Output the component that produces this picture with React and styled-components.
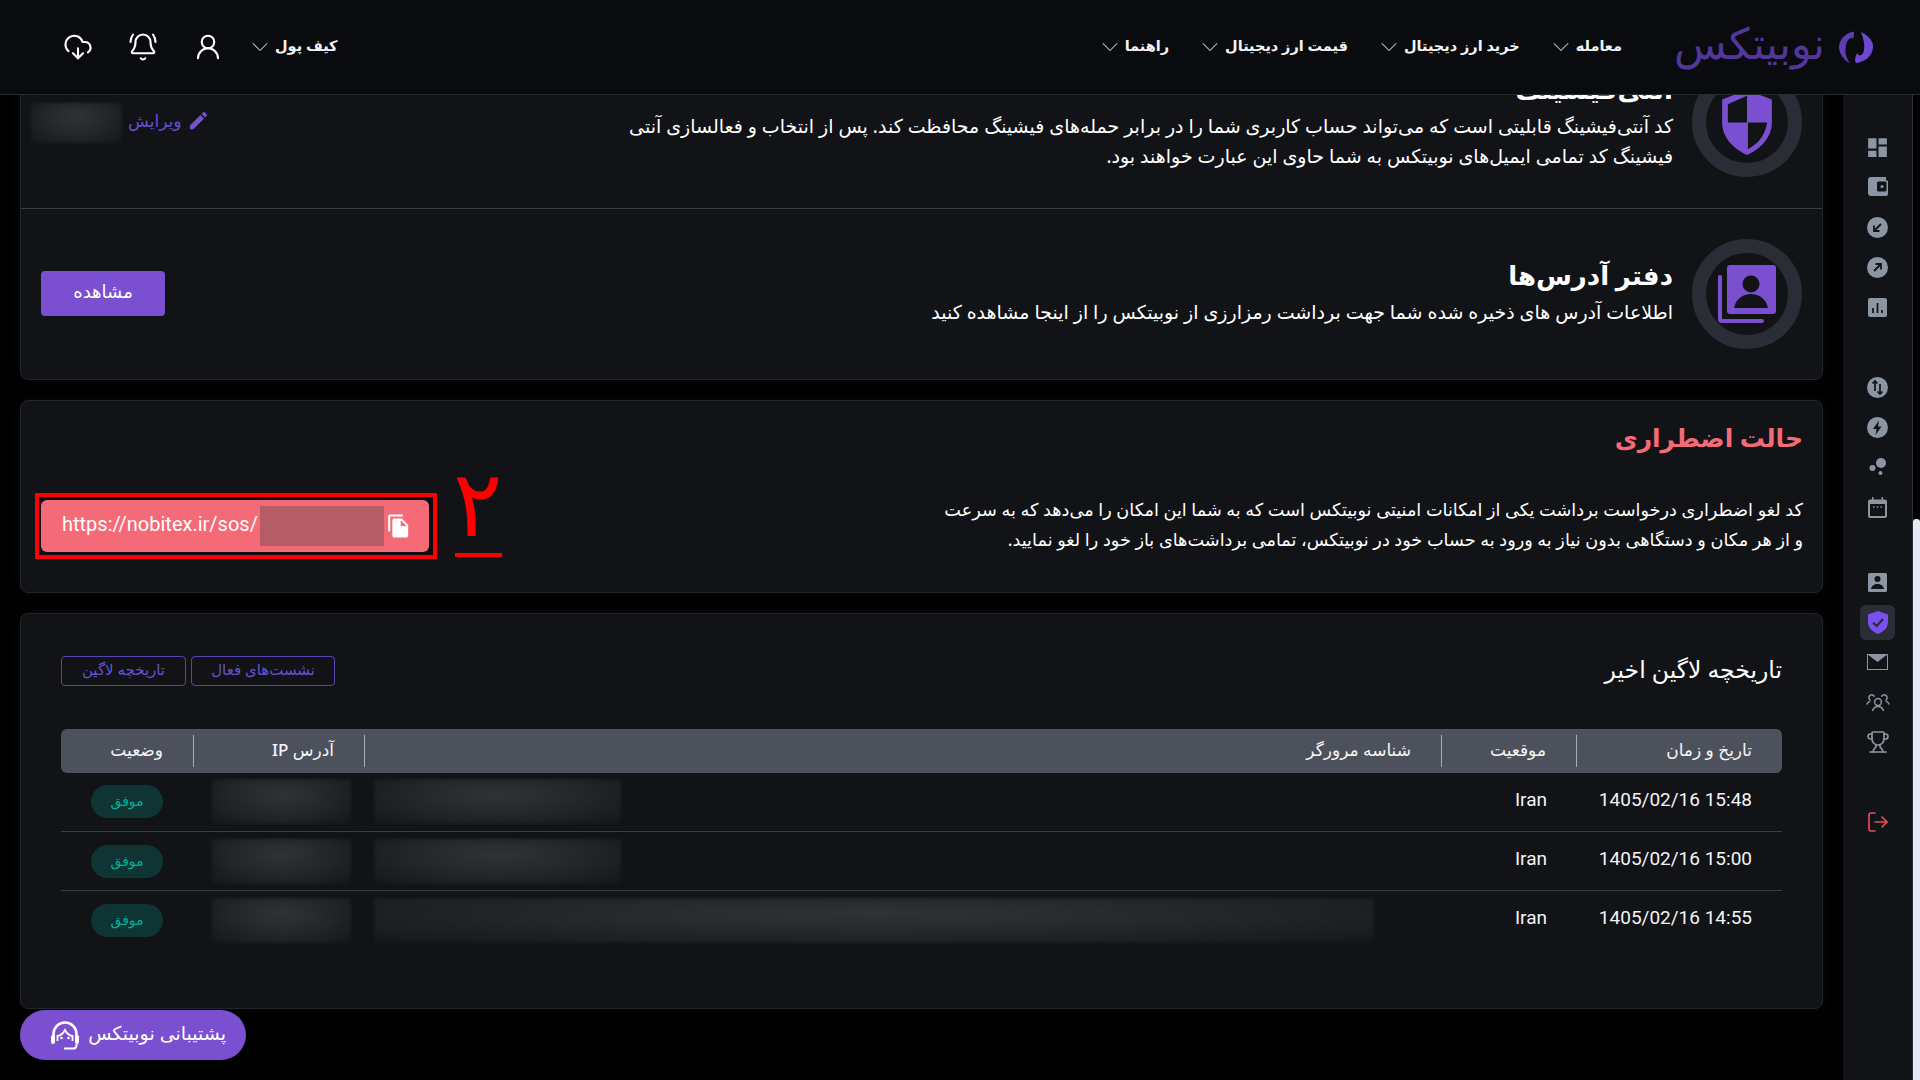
import React from 'react'
import styled, { createGlobalStyle } from 'styled-components'
import { ChevronDown, CloudDownload, BellRing, UserRound, Trophy, LogOut } from 'lucide-react'
import { MdEdit, MdDashboard, MdFileCopy } from 'react-icons/md'

const FONT = `"Noto Sans", Roboto, "DejaVu Sans", sans-serif`
const PURPLE = '#7a50d0'
const ICON_GREY = '#8d95a3'
const CARD_BG = '#111316'

const GlobalStyle = createGlobalStyle`
  html, body { margin: 0; padding: 0; height: 100%; background: #000; overflow: hidden; }
  body { font-family: ${FONT}; color: #fff; }
  * { box-sizing: border-box; }
`

const Page = styled.div`
  width: 100vw;
  height: 100vh;
  position: relative;
  display: flex;
  flex-direction: column;
  direction: rtl;
  overflow: hidden;
  background: #000;
`
const Header = styled.header`
  height: 95px;
  flex: none;
  display: flex;
  align-items: center;
  justify-content: space-between;
  padding: 0 46px 0 63px;
  background: #0a0b0e;
  border-bottom: 1px solid #262932;
  position: relative;
  z-index: 2;
`
const HeaderSide = styled.div`
  display: flex;
  align-items: center;
`
const Logo = styled.div`
  display: flex;
  align-items: center;
  gap: 14px;
  margin-left: 52px;
`
const LogoText = styled.span`
  font-size: 43px;
  font-weight: 300;
  line-height: 1;
  padding-bottom: 10px;
  color: #51379c;
`
const Nav = styled.nav`
  display: flex;
  align-items: center;
  gap: 34px;
`
const NavItem = styled.div`
  display: flex;
  align-items: center;
  gap: 8px;
  font-size: 14.5px;
  font-weight: 600;
  color: #f3f4f6;
  svg { color: #c8ccd4; margin: 0 -7px; }
`
const NavLabel = styled.span`
  padding-bottom: 4px;
`
const HeaderIcons = styled.div`
  display: flex;
  align-items: center;
  gap: 35px;
  margin-right: 30px;
  color: #fff;
`
const Body = styled.div`
  flex: 1;
  min-height: 0;
  display: flex;
`
const Scrollbar = styled.div`
  width: 7px;
  flex: none;
  display: flex;
  flex-direction: column;
  justify-content: flex-end;
`
const ScrollThumb = styled.div`
  height: 563px;
  background: #e5e9f2;
  border-radius: 3px 3px 0 0;
  margin-bottom: -2px;
`
const Sidebar = styled.aside`
  width: 70px;
  flex: none;
  background: ${CARD_BG};
  border-right: 1px solid #2a2d35;
  padding-top: 32px;
  display: flex;
  flex-direction: column;
`
const SideGroup = styled.div`
  display: flex;
  flex-direction: column;
  margin-bottom: ${(p) => p.$gap}px;
`
const SideItem = styled.div`
  height: 40px;
  display: flex;
  align-items: center;
  justify-content: center;
  color: ${(p) => p.$color || ICON_GREY};
`
const ActivePill = styled.div`
  width: 35px;
  height: 35px;
  display: flex;
  align-items: center;
  justify-content: center;
  border-radius: 6px;
  background: #2a2d35;
`
const Main = styled.main`
  flex: 1;
  min-width: 0;
  padding: 0 20px;
  display: flex;
  flex-direction: column;
  gap: 20px;
  margin-top: -60px;
`
const Card = styled.section`
  background: ${CARD_BG};
  border: 1px solid #22252b;
  border-radius: 8px;
  box-shadow: 0 0 12px rgba(30, 32, 38, 0.35);
`
const SettingRow = styled.div`
  height: 172px;
  display: flex;
  align-items: center;
  padding: 0 20px;
  gap: 19px;
  & + & { height: 171px; border-top: 1px solid #3a3d47; }
`
const IconRing = styled.div`
  width: 110px;
  height: 110px;
  flex: none;
  border-radius: 50%;
  border: 14px solid #2a2d35;
  display: flex;
  align-items: center;
  justify-content: center;
  color: ${PURPLE};
`
const SettingText = styled.div`
  flex: 1;
  min-width: 0;
  padding-bottom: ${(p) => p.$lift || 0}px;
`
const SettingTitle = styled.h3`
  margin: 0 0 4px;
  font-size: 26px;
  font-weight: 600;
  line-height: 36px;
  color: #fff;
`
const SettingDesc = styled.p`
  margin: 0;
  font-size: 19px;
  line-height: 30px;
  color: #fff;
`
const EditLink = styled.div`
  display: flex;
  align-items: center;
  gap: 6px;
  margin-top: -6px;
  color: #6a4fd0;
  font-size: 17px;
  svg { color: ${PURPLE}; }
`
const BlurBox = styled.div`
  flex: none;
  width: ${(p) => p.$w}px;
  height: ${(p) => p.$h || 45}px;
  background: radial-gradient(ellipse at 50% 35%, #303233 0%, #222426 55%, #141619 100%);
  filter: blur(1.5px);
`
const EditSide = styled.div`
  display: flex;
  align-items: center;
  gap: 6px;
  align-self: flex-start;
  margin: 67px 0 0 -10px;
`
const PrimaryButton = styled.button`
  width: 124px;
  height: 45px;
  flex: none;
  margin: 0 0 2px;
  padding: 0 0 4px;
  border: none;
  border-radius: 4px;
  background: ${PURPLE};
  color: #fff;
  font-family: ${FONT};
  font-size: 18px;
  font-weight: 500;
`
const EmergencyCard = styled(Card)`
  height: 193px;
  padding: 0 19px 0 14px;
`
const EmergencyTitle = styled.h3`
  margin: 0;
  padding-top: 15px;
  font-size: 25px;
  font-weight: 600;
  line-height: 42px;
  color: #f56a77;
`
const EmergencyRow = styled.div`
  display: flex;
  align-items: center;
  justify-content: space-between;
  margin-top: 35px;
`
const EmergencyDesc = styled.p`
  margin: 0 0 5px;
  font-size: 17.7px;
  line-height: 30px;
  color: #fff;
`
const Marked = styled.div`
  position: relative;
  flex: none;
  width: 402px;
  height: 66px;
  padding: 3px 4px 3px 2px;
  border: 4px solid #ff0000;
  background: #0b0c0f;
`
const SosButton = styled.div`
  height: 52px;
  display: flex;
  align-items: center;
  gap: 2px;
  padding: 0 18px 0 21px;
  border-radius: 6px;
  background: #f56a77;
  color: #fff;
  direction: ltr;
  font-family: Roboto, sans-serif;
  font-size: 20px;
`
const SosUrl = styled.span`
  padding-bottom: 5px;
`
const SosSecret = styled.span`
  width: 127px;
  height: 40px;
  background: #b45d67;
`
const AnnotationNumber = styled.span`
  position: absolute;
  left: 416px;
  top: -38px;
  width: 47px;
  height: 98px;
  text-align: center;
  font-size: 92px;
  font-weight: 300;
  line-height: 84px;
  color: #ff0000;
  border-bottom: 4px solid #ff0000;
`
const HistoryCard = styled(Card)`
  height: 396px;
  padding: 42px 40px 0;
`
const HistoryTop = styled.div`
  height: 30px;
  display: flex;
  align-items: center;
  justify-content: space-between;
`
const HistoryTitle = styled.h3`
  margin: 0 0 4px;
  font-size: 23.5px;
  font-weight: 500;
  color: #fff;
`
const Tabs = styled.div`
  display: flex;
  gap: 5px;
`
const Tab = styled.div`
  height: 30px;
  width: ${(p) => p.$w}px;
  display: flex;
  align-items: center;
  justify-content: center;
  padding-bottom: 4px;
  border: 1px solid #5a43b5;
  border-radius: 4px;
  color: #6a4fd0;
  font-size: 15px;
`
const HeadRow = styled.div`
  display: grid;
  grid-template-columns: 205px 135px 1077px 171px 133px;
  height: 44px;
  margin: 43px 0 -1px;
  align-items: center;
  background: #4d515c;
  border-radius: 6px;
`
const HeadCell = styled.div`
  height: 32px;
  display: flex;
  align-items: center;
  padding: 0 30px 4px 0;
  font-size: 17px;
  font-weight: 500;
  color: #f5f6f8;
  & + & { border-right: 1px solid #a9adb5; }
`
const Row = styled.div`
  display: grid;
  grid-template-columns: 205px 135px 1077px 171px 133px;
  height: 59px;
  align-items: center;
  & + & { border-top: 1px solid #3a3d47; }
`
const Cell = styled.div`
  padding: 0 30px 5px 0;
  font-family: Roboto, sans-serif;
  font-size: 19px;
  color: #f3f4f6;
  direction: ltr;
  text-align: right;
`
const BlurCell = styled.div`
  display: flex;
  justify-content: flex-end;
  padding-left: ${(p) => p.$left}px;
`
const StatusCell = styled.div`
  display: flex;
  justify-content: flex-end;
  padding-left: 30px;
`
const StatusPill = styled.span`
  width: 72px;
  height: 33px;
  display: flex;
  align-items: center;
  justify-content: center;
  padding-bottom: 2px;
  border-radius: 17px;
  background: #0e3533;
  color: #00b09b;
  font-size: 14px;
`
const SupportButton = styled.div`
  position: absolute;
  left: 20px;
  top: 1010px;
  width: 226px;
  height: 50px;
  display: flex;
  align-items: center;
  gap: 8px;
  padding-right: 20px;
  border-radius: 25px;
  background: ${PURPLE};
  color: #fff;
  font-size: 19px;
  font-weight: 500;
  z-index: 3;
`
const SupportLabel = styled.span`
  padding-bottom: 4px;
`

const LogoMark = () => (
  <svg width="35" height="33" viewBox="0 0 35 33">
    <path d="M15 .5C6 2 0 9 0 16c0 7 5 13 11 16.500-4-6-5.500-12-4-18C8 9 11 6 14 7.500c1-2 1-5 1-7z" fill="#5d3cb5" />
    <path d="M22 1c8 4 13 10 12 16-1 8-8 14-17 15-2-3 0-8 1-10 2 4 6 3 7-3 1-7-1-12-3-18z" fill="#6f48cf" />
  </svg>
)
const ShieldHalf = () => (
  <svg width="54" height="67" viewBox="0 0 56 70">
    <path d="M28 1 54 11v24c0 15-11 27-26 34C13 62 2 50 2 35V11z" fill="currentColor" />
    <path d="M28 7 8 16v19h20zM29 35v28c9-5 18-13 20-28z" fill="#111316" />
  </svg>
)
const ContactBook = () => (
  <svg width="58" height="58" viewBox="0 0 58 58">
    <rect x="9" y="0" width="49" height="49" rx="3" fill="currentColor" />
    <circle cx="33" cy="19" r="8.500" fill="#111316" />
    <path d="M16 43c2-10 10-14 17-14s15 4 17 14z" fill="#111316" />
    <path d="M2 12v42a2 2 0 0 0 2 2h40" stroke="currentColor" strokeWidth="4" fill="none" strokeLinecap="round" />
  </svg>
)
const WalletIcon = () => (
  <svg width="20" height="20" viewBox="0 0 20 20">
    <path d="M3 0h15v3.500h1a1 1 0 0 1 1 1V17a2 2 0 0 1-2 2H3a3 3 0 0 1-3-2.500V3a3 3 0 0 1 3-3z" fill="currentColor" />
    <rect x="9" y="4.500" width="9.500" height="10" rx="1.500" fill="#111316" />
    <circle cx="14" cy="9.500" r="1.600" fill="currentColor" />
  </svg>
)
const ArrowCircle = ({ flip }) => (
  <svg width="21" height="21" viewBox="0 0 21 21">
    <circle cx="10.500" cy="10.500" r="10.500" fill="currentColor" />
    {flip
      ? <path d="M7 14l7-7M8.500 7H14v5.500" stroke="#111316" strokeWidth="1.800" fill="none" />
      : <path d="M14 7l-7 7M12.500 14H7V8.500" stroke="#111316" strokeWidth="1.800" fill="none" />}
  </svg>
)
const ChartIcon = () => (
  <svg width="19" height="19" viewBox="0 0 19 19">
    <rect width="19" height="19" rx="2" fill="currentColor" />
    <path d="M5 10v5M9.500 5v10M14 12v3" stroke="#111316" strokeWidth="1.700" />
  </svg>
)
const SwapIcon = () => (
  <svg width="21" height="21" viewBox="0 0 21 21">
    <circle cx="10.500" cy="10.500" r="10.500" fill="currentColor" />
    <path d="M8 14V4M5.500 6.500 8 4l2.500 2.500M13 7v10M10.500 14.500 13 17l2.500-2.500" stroke="#111316" strokeWidth="1.700" fill="none" />
  </svg>
)
const BoltIcon = () => (
  <svg width="21" height="21" viewBox="0 0 21 21">
    <circle cx="10.500" cy="10.500" r="10.500" fill="currentColor" />
    <path d="M12 3.500 6 12h3.500l-1 6 6-8.500H11z" fill="#111316" />
  </svg>
)
const DotsIcon = () => (
  <svg width="18" height="18" viewBox="0 0 18 18">
    <circle cx="12" cy="5" r="5" fill="currentColor" />
    <circle cx="3.500" cy="10" r="3" fill="currentColor" />
    <circle cx="11.500" cy="15" r="2" fill="currentColor" />
  </svg>
)
const CalendarIcon = () => (
  <svg width="19" height="21" viewBox="0 0 19 21">
    <path d="M4 0h1.500v2.500h8V0H15v2.500h2a2 2 0 0 1 2 2V19a2 2 0 0 1-2 2H2a2 2 0 0 1-2-2V4.500a2 2 0 0 1 2-2h2z" fill="currentColor" />
    <rect x="2" y="7" width="15" height="12" fill="#111316" />
    <path d="M5 10h1.500M8.800 10h1.500M12.500 10H14" stroke="currentColor" strokeWidth="1.500" />
  </svg>
)
const ContactIcon = () => (
  <svg width="19" height="19" viewBox="0 0 19 19">
    <rect width="19" height="19" rx="1.500" fill="currentColor" />
    <circle cx="9.500" cy="6" r="3" fill="#111316" />
    <path d="M3 16c.5-3.500 3.500-5 6.500-5s6 1.500 6.500 5z" fill="#111316" />
  </svg>
)
const ShieldCheck = () => (
  <svg width="20" height="23" viewBox="0 0 20 23">
    <path d="M10 0 20 3.500V11c0 5.500-4 9.500-10 12C4 20.500 0 16.500 0 11V3.500z" fill="#7a50f0" />
    <path d="M5 11.500 8.700 15 15 8" stroke="#2a2d35" strokeWidth="2.200" fill="none" />
  </svg>
)
const MailIcon = () => (
  <svg width="21" height="16" viewBox="0 0 21 16">
    <rect x=".5" y=".5" width="20" height="15" fill="#111316" stroke="currentColor" />
    <path d="M0 0h21L10.500 8z" fill="currentColor" />
  </svg>
)
const UsersIcon = () => (
  <svg width="24" height="19" viewBox="0 0 24 19" fill="none" stroke="currentColor" strokeWidth="1.500">
    <circle cx="12" cy="9" r="3.400" />
    <path d="M6.500 18c.8-3 3-4.500 5.500-4.500s4.700 1.500 5.500 4.500" />
    <path d="M4.600 7.400a2.900 2.900 0 1 1 3.900-3.600M.8 11.500c.6-1.800 1.800-3 3.600-3.600M19.400 7.400a2.900 2.900 0 1 0-3.900-3.600M23.200 11.500c-.6-1.800-1.800-3-3.600-3.600" />
  </svg>
)
const HeadsetIcon = () => (
  <svg width="30" height="32" viewBox="0 0 30 32" fill="none">
    <path d="M3.500 19V15a11.500 11.500 0 0 1 23 0v4" stroke="#fff" strokeWidth="2.600" />
    <rect x="1" y="16" width="4" height="9" rx="2" fill="#fff" />
    <rect x="25" y="16" width="4" height="9" rx="2" fill="#fff" />
    <path d="M7.500 22v-5c3.500-.5 6-3 7.500-6 1.500 3 4 5.500 7.500 6v5" stroke="#fff" strokeWidth="1.800" />
    <circle cx="11.500" cy="19" r="1.300" fill="#fff" />
    <circle cx="18.500" cy="19" r="1.300" fill="#fff" />
    <path d="M26.500 25v1.500a3 3 0 0 1-3 3H14" stroke="#fff" strokeWidth="2.200" />
  </svg>
)

const navItems = ['معامله', 'خرید ارز دیجیتال', 'قیمت ارز دیجیتال', 'راهنما']
const logins = [
  { time: '1405/02/16 15:48', ua: 247 },
  { time: '1405/02/16 15:00', ua: 247 },
  { time: '1405/02/16 14:55', ua: 1000 },
]

const App = () => {
  return (
    <Page>
      <GlobalStyle />
      <Header>
        <HeaderSide>
          <Logo>
            <LogoMark />
            <LogoText>نوبیتکس</LogoText>
          </Logo>
          <Nav>
            {navItems.map((n) => (
              <NavItem key={n}><NavLabel>{n}</NavLabel><ChevronDown size={28} strokeWidth={0.9} /></NavItem>
            ))}
          </Nav>
        </HeaderSide>
        <HeaderSide>
          <NavItem><NavLabel>کیف پول</NavLabel><ChevronDown size={28} strokeWidth={0.9} /></NavItem>
          <HeaderIcons>
            <UserRound size={30} strokeWidth={1.7} />
            <BellRing size={30} strokeWidth={1.7} />
            <CloudDownload size={30} strokeWidth={1.7} />
          </HeaderIcons>
        </HeaderSide>
      </Header>
      <Body>
        <Scrollbar><ScrollThumb /></Scrollbar>
        <Sidebar>
          <SideGroup $gap={40}>
            <SideItem><MdDashboard size={25} /></SideItem>
            <SideItem><WalletIcon /></SideItem>
            <SideItem><ArrowCircle /></SideItem>
            <SideItem><ArrowCircle flip /></SideItem>
            <SideItem><ChartIcon /></SideItem>
          </SideGroup>
          <SideGroup $gap={35}>
            <SideItem><SwapIcon /></SideItem>
            <SideItem><BoltIcon /></SideItem>
            <SideItem><DotsIcon /></SideItem>
            <SideItem><CalendarIcon /></SideItem>
          </SideGroup>
          <SideGroup $gap={40}>
            <SideItem><ContactIcon /></SideItem>
            <SideItem><ActivePill><ShieldCheck /></ActivePill></SideItem>
            <SideItem><MailIcon /></SideItem>
            <SideItem><UsersIcon /></SideItem>
            <SideItem><Trophy size={24} strokeWidth={1.7} /></SideItem>
          </SideGroup>
          <SideItem $color="#e8505f"><LogOut size={24} strokeWidth={1.6} /></SideItem>
        </Sidebar>
        <Main>
          <Card>
            <SettingRow>
              <IconRing><ShieldHalf /></IconRing>
              <SettingText $lift={2}>
                <SettingTitle>آنتی‌فیشینگ</SettingTitle>
                <SettingDesc>
                  کد آنتی‌فیشینگ قابلیتی است که می‌تواند حساب کاربری شما را در برابر حمله‌های فیشینگ محافظت کند. پس از انتخاب و فعالسازی آنتی
                  <br />
                  فیشینگ کد تمامی ایمیل‌های نوبیتکس به شما حاوی این عبارت خواهند بود.
                </SettingDesc>
              </SettingText>
              <EditSide>
                <EditLink><MdEdit size={23} />ویرایش</EditLink>
                <BlurBox $w={91} $h={40} />
              </EditSide>
            </SettingRow>
            <SettingRow>
              <IconRing><ContactBook /></IconRing>
              <SettingText $lift={5}>
                <SettingTitle>دفتر آدرس‌ها</SettingTitle>
                <SettingDesc>اطلاعات آدرس های ذخیره شده شما جهت برداشت رمزارزی از نوبیتکس را از اینجا مشاهده کنید</SettingDesc>
              </SettingText>
              <PrimaryButton>مشاهده</PrimaryButton>
            </SettingRow>
          </Card>
          <EmergencyCard>
            <EmergencyTitle>حالت اضطراری</EmergencyTitle>
            <EmergencyRow>
              <EmergencyDesc>
                کد لغو اضطراری درخواست برداشت یکی از امکانات امنیتی نوبیتکس است که به شما این امکان را می‌دهد که به سرعت
                <br />
                و از هر مکان و دستگاهی بدون نیاز به ورود به حساب خود در نوبیتکس، تمامی برداشت‌های باز خود را لغو نمایید.
              </EmergencyDesc>
              <Marked>
                <SosButton>
                  <SosUrl>https://nobitex.ir/sos/</SosUrl>
                  <SosSecret />
                  <MdFileCopy size={26} />
                </SosButton>
                <AnnotationNumber>۲</AnnotationNumber>
              </Marked>
            </EmergencyRow>
          </EmergencyCard>
          <HistoryCard>
            <HistoryTop>
              <HistoryTitle>تاریخچه لاگین اخیر</HistoryTitle>
              <Tabs>
                <Tab $w={144}>نشست‌های فعال</Tab>
                <Tab $w={125}>تاریخچه لاگین</Tab>
              </Tabs>
            </HistoryTop>
            <HeadRow>
              <HeadCell>تاریخ و زمان</HeadCell>
              <HeadCell>موقعیت</HeadCell>
              <HeadCell>شناسه مرورگر</HeadCell>
              <HeadCell>آدرس IP</HeadCell>
              <HeadCell>وضعیت</HeadCell>
            </HeadRow>
            {logins.map((l) => (
              <Row key={l.time}>
                <Cell>{l.time}</Cell>
                <Cell>Iran</Cell>
                <BlurCell $left={9}><BlurBox $w={l.ua} /></BlurCell>
                <BlurCell $left={18}><BlurBox $w={139} /></BlurCell>
                <StatusCell><StatusPill>موفق</StatusPill></StatusCell>
              </Row>
            ))}
          </HistoryCard>
        </Main>
      </Body>
      <SupportButton><SupportLabel>پشتیبانی نوبیتکس</SupportLabel><HeadsetIcon /></SupportButton>
    </Page>
  )
}

export default App
